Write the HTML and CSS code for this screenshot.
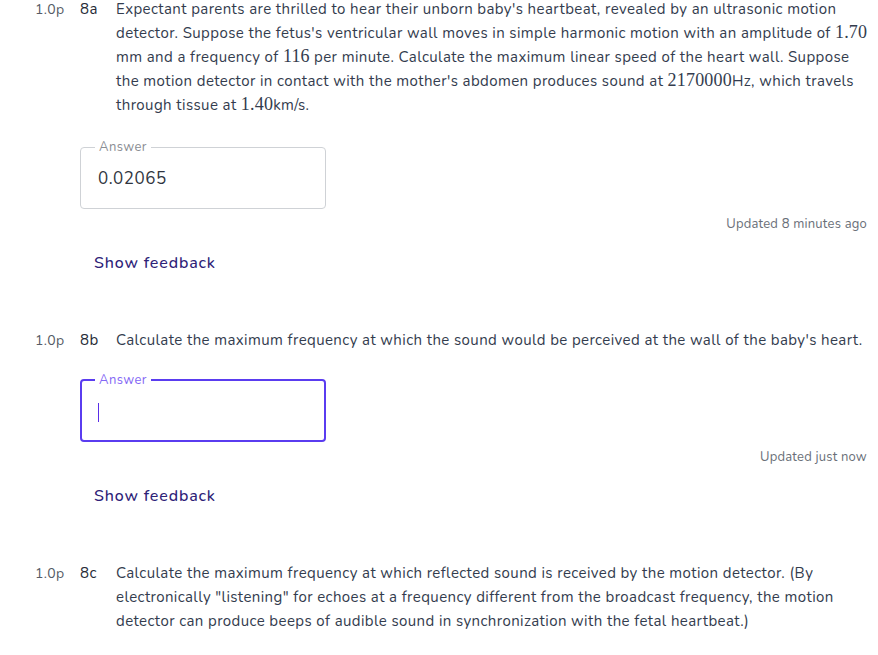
FILE: index.html
```html
<!DOCTYPE html>
<html lang="en">
<head>
<meta charset="utf-8">
<title>Questions</title>
<link rel="stylesheet" href="styles.css">
</head>
<body>
<main class="page">
  <section class="item">
    <div class="question">
      <span class="pts">1.0p</span>
      <span class="num">8a</span>
      <p class="text">Expectant parents are thrilled to hear their unborn baby's heartbeat, revealed by an ultrasonic motion detector. Suppose the fetus's ventricular wall moves in simple harmonic motion with an amplitude of <span class="math">1.70</span> mm and a frequency of <span class="math">116</span> per minute. Calculate the maximum linear speed of the heart wall. Suppose the motion detector in contact with the mother's abdomen produces sound at <span class="math">2170000</span>Hz, which travels through tissue at <span class="math">1.40</span>km/s.</p>
    </div>
    <fieldset class="answer">
      <legend>Answer</legend>
      <div class="value">0.02065</div>
    </fieldset>
    <div class="updated">Updated 8 minutes ago</div>
    <div class="feedback">Show feedback</div>
  </section>

  <section class="item">
    <div class="question">
      <span class="pts">1.0p</span>
      <span class="num">8b</span>
      <p class="text">Calculate the maximum frequency at which the sound would be perceived at the wall of the baby's heart.</p>
    </div>
    <fieldset class="answer focused">
      <legend>Answer</legend>
      <div class="value"><span class="caret"></span></div>
    </fieldset>
    <div class="updated">Updated just now</div>
    <div class="feedback">Show feedback</div>
  </section>

  <section class="item">
    <div class="question">
      <span class="pts">1.0p</span>
      <span class="num">8c</span>
      <p class="text">Calculate the maximum frequency at which reflected sound is received by the motion detector. (By electronically "listening" for echoes at a frequency different from the broadcast frequency, the motion detector can produce beeps of audible sound in synchronization with the fetal heartbeat.)</p>
    </div>
  </section>
</main>
</body>
</html>
```

FILE: styles.css
```css
html, body {
  margin: 0;
  padding: 0;
  background: #ffffff;
}

body {
  font-family: "Nunito", "Lato", "Noto Sans", sans-serif;
  color: #333c4e;
}

.page {
  margin-top: -3px;
  display: flex;
  flex-direction: column;
}

.item {
  display: flex;
  flex-direction: column;
}

.item + .item {
  margin-top: 55px;
}

.question {
  display: grid;
  grid-template-columns: 45px 36px 1fr;
  padding: 0 6px 0 35px;
  line-height: 24px;
}

.pts {
  font-size: 14px;
  letter-spacing: 0.3px;
  color: #555b66;
  padding-top: 1px;
}

.num {
  font-size: 15px;
  letter-spacing: 0.5px;
  color: #262b36;
}

.text {
  margin: 0;
  font-size: 15px;
  line-height: 24px;
  letter-spacing: 0.4px;
}

.math {
  font-family: "Liberation Serif", "DejaVu Serif", serif;
  font-size: 18px;
  line-height: 1;
  letter-spacing: 0.2px;
}

.answer {
  margin: 22px 0 0 80px;
  width: 246px;
  box-sizing: border-box;
  height: 70px;
  padding: 0 14px;
  border: 1px solid #cfd2d6;
  border-radius: 4px;
}

.answer legend {
  padding: 0 4px;
  font-size: 13px;
  line-height: 16px;
  letter-spacing: 0.4px;
  color: #8a8d93;
}

.value {
  padding: 13px 3px 0;
  font-size: 17px;
  line-height: 22px;
  letter-spacing: 0.5px;
  color: #2f3540;
  height: 22px;
}

.answer.focused {
  margin-top: 19px;
  border: 2px solid #5a3cf0;
  padding: 0 13px;
  height: 70px;
}

.answer.focused legend {
  color: #8467f5;
}

.caret {
  display: inline-block;
  width: 1px;
  height: 19px;
  margin-top: 2px;
  background: #5a2ee8;
  vertical-align: top;
}

.updated {
  align-self: flex-end;
  margin: 5px 11px 0 0;
  font-size: 13px;
  line-height: 20px;
  letter-spacing: 0.2px;
  color: #6a6f78;
}

.feedback {
  margin: 19px 0 0 94px;
  font-size: 16px;
  line-height: 20px;
  letter-spacing: 0.85px;
  color: #2d2277;
  font-weight: 500;
}
```
